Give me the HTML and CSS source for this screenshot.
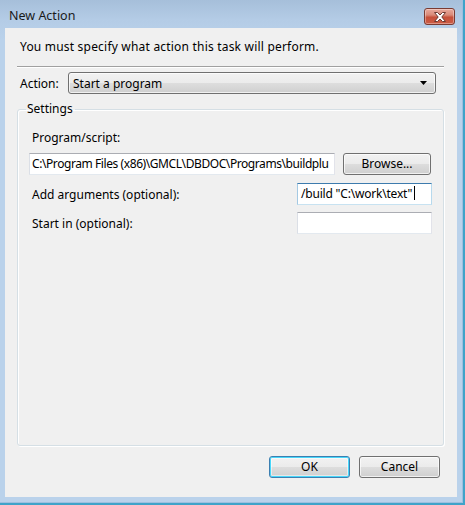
FILE: index.html
```html
<!DOCTYPE html>
<html>
<head>
<meta charset="utf-8">
<link rel="stylesheet" href="styles.css">
</head>
<body>
<div class="window">
  <div class="titlebar">
    <span class="title">New Action</span>
    <div class="close">
      <svg width="14" height="10" viewBox="0 0 14 10">
        <path d="M1.5 0.5 H4.5 L7 3 L9.5 0.5 H12.5 L8.8 5 L12.5 9.5 H9.5 L7 7 L4.5 9.5 H1.5 L5.2 5 Z" fill="#fff" stroke="#6b3a33" stroke-width="1"/>
      </svg>
    </div>
  </div>
  <div class="content">
    <p class="intro">You must specify what action this task will perform.</p>
    <div class="sep"></div>
    <div class="action-row">
      <span class="label">Action:</span>
      <div class="combo">
        <span>Start a program</span>
        <svg class="arrow" width="8" height="5" viewBox="0 0 8 5"><path d="M0 0 H7 L3.5 4 Z" fill="#000"/></svg>
      </div>
    </div>
    <fieldset class="group">
      <legend>Settings</legend>
      <div class="field-label">Program/script:</div>
      <div class="prog-row">
        <div class="input prog"><span class="clip">C:\Program Files (x86)\GMCL\DBDOC\Programs\buildplu</span></div>
        <div class="btn browse">Browse...</div>
      </div>
      <div class="row args-row">
        <span class="row-label">Add arguments (optional):</span>
        <div class="input small focused">/build "C:\work\text"<span class="caret"></span></div>
      </div>
      <div class="row start-row">
        <span class="row-label">Start in (optional):</span>
        <div class="input small"></div>
      </div>
    </fieldset>
    <div class="buttons">
      <div class="btn ok">OK</div>
      <div class="btn cancel">Cancel</div>
    </div>
  </div>
</div>
</body>
</html>
```

FILE: styles.css
```css
* { box-sizing: border-box; }
html, body { margin: 0; padding: 0; background: #ffffff; }
body {
  font-family: "Noto Sans", "DejaVu Sans", sans-serif;
  font-size: 12px;
  color: #000;
}
.window {
  width: 465px;
  height: 505px;
  background: linear-gradient(#a6bfda 0px, #b4cce6 20px, #bad2eb 40px, #bad2eb 100%);
  padding: 0 8px 8px 5px;
  display: flex;
  flex-direction: column;
  box-shadow: inset -2px -2px 0 #3fa3c9, inset -3px -3px 0 #9ebfdf;
}
.titlebar {
  height: 28px;
  position: relative;
  display: flex;
  align-items: center;
  padding-left: 4px;
  padding-top: 4px;
}
.title {
  font-size: 12.5px;
  color: #1a1a1a;
  line-height: 16px;
}
.close {
  position: absolute;
  left: 419px;
  top: 8px;
  width: 31px;
  height: 17px;
  border: 1px solid #7a3b32;
  border-radius: 3px;
  background: linear-gradient(#e9a99c 0%, #d98a78 40%, #c6503a 55%, #cc5c45 100%);
  display: flex;
  align-items: center;
  justify-content: center;
  box-shadow: inset 0 0 0 1px rgba(255,255,255,0.35);
}
.content {
  width: 452px;
  height: 469px;
  background: #f0f0f0;
  display: flex;
  flex-direction: column;
  padding: 0 0 19px 0;
}
.intro {
  margin: 11px 0 0 15px;
  line-height: 16px;
  letter-spacing: 0.2px;
}
.sep {
  margin: 11px 13px 0 12px;
  height: 2px;
  border-top: 1px solid #a0a0a0;
  border-bottom: 1px solid #ffffff;
}
.action-row {
  display: flex;
  align-items: center;
  margin: 4px 0 0 15px;
  height: 22px;
}
.action-row .label { width: 48px; }
.combo {
  width: 368px;
  height: 22px;
  border: 1px solid #707070;
  border-radius: 3px;
  background: linear-gradient(#f2f2f2 0%, #ebebeb 50%, #dddddd 51%, #cfcfcf 100%);
  box-shadow: inset 0 0 0 1px rgba(255,255,255,0.7);
  display: flex;
  align-items: center;
  justify-content: space-between;
  padding: 0 7px 0 4px;
}
.group {
  margin: 7px 13px 0 12px;
  padding: 13px 11px 0 11px;
  border: 1px solid #d5dfe5;
  border-radius: 3px;
  box-shadow: inset 1px 1px 0 #fff, 1px 1px 0 #fff;
  flex: 1;
  min-width: 0;
}
.group legend {
  margin-left: -3px;
  padding: 0 2px 0 1px;
  line-height: 16px;
}
.field-label {
  margin-left: 3px;
  line-height: 16px;
}
.prog-row {
  display: flex;
  margin-top: 7px;
  gap: 8px;
}
.input {
  height: 22px;
  background: #fff;
  border: 1px solid #abadb3;
  border-color: #abadb3 #e2e3ea #e3e9ef #dbdfe6;
  line-height: 20px;
  padding: 0 3px;
  white-space: nowrap;
  overflow: hidden;
}
.input.prog { width: 306px; padding-right: 1px; padding-left: 2px; }
.clip { display: block; overflow: hidden; letter-spacing: -0.42px; }
.input.small { width: 135px; }
.input.focused { border-color: #3d7bad #b7d9ed #c7e2f1 #a4c9e3; letter-spacing: -0.2px; }
.caret {
  display: inline-block;
  width: 1px;
  height: 14px;
  background: #000;
  vertical-align: -2px;
  margin-left: 2px;
}
.btn {
  height: 22px;
  border: 1px solid #707070;
  border-radius: 3px;
  background: linear-gradient(#f2f2f2 0%, #ebebeb 50%, #dddddd 51%, #cfcfcf 100%);
  box-shadow: inset 0 0 0 1px rgba(255,255,255,0.7);
  display: flex;
  align-items: center;
  justify-content: center;
  line-height: 16px;
}
.browse { width: 88px; }
.row {
  display: flex;
  justify-content: space-between;
  align-items: center;
}
.args-row { margin-top: 8px; }
.start-row { margin-top: 7px; }
.row-label { margin-left: 3px; }
.buttons {
  display: flex;
  justify-content: flex-end;
  gap: 9px;
  margin: 10px 17px 0 0;
}
.ok, .cancel { width: 81px; }
.ok {
  border-color: #3c7fb1;
  box-shadow: inset 0 0 0 1px #48d7fa, inset 0 0 0 2px rgba(255,255,255,0.5);
}
```
